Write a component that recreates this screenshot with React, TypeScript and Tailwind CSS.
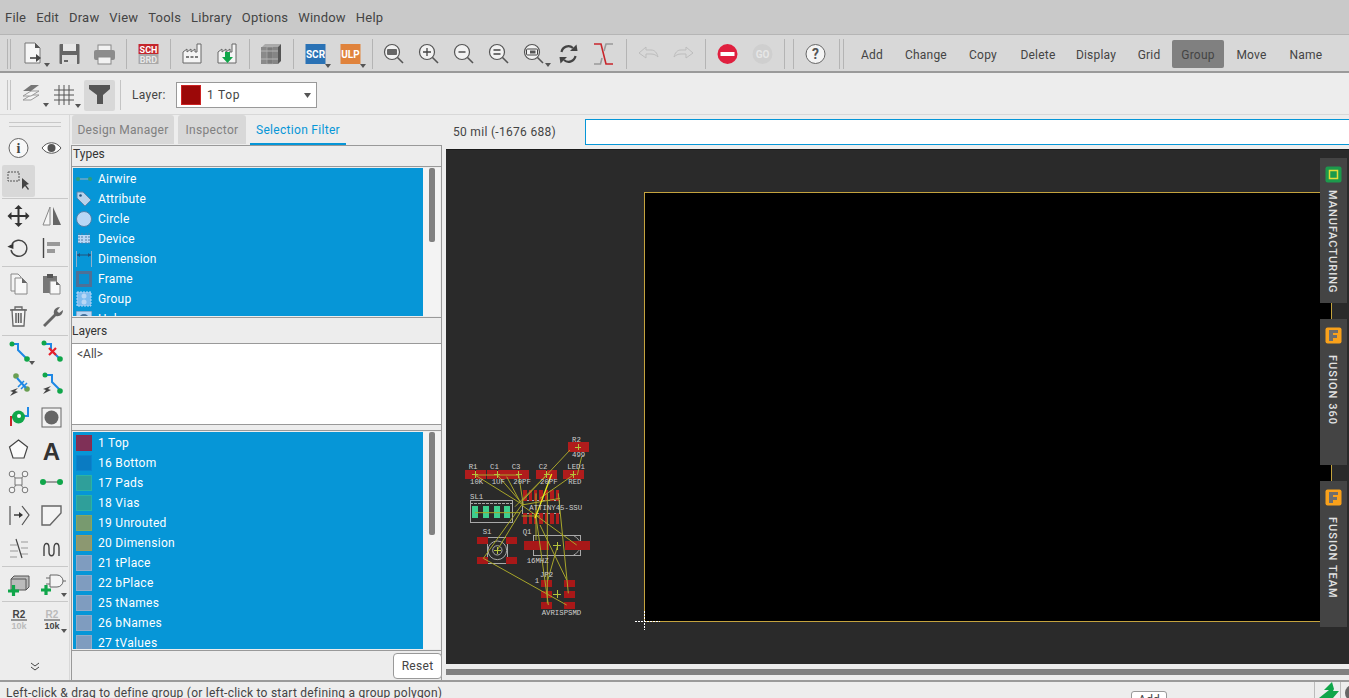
import type { ReactNode } from "react";

const FONT = "[font-family:Roboto,sans-serif]";

function Ico({ w = 35, h = 28, children }: { w?: number; h?: number; children: ReactNode }) {
  return (
    <svg width={w} height={h} viewBox={`0 0 ${w} ${h}`} className="shrink-0">
      {children}
    </svg>
  );
}

const Tri = ({ x = 27, y = 23 }: { x?: number; y?: number }) => (
  <path d={`M${x} ${y}h6l-3 4z`} fill="#555" />
);

function Mag({ children, tri }: { children?: ReactNode; tri?: boolean }) {
  return (
    <Ico>
      <circle cx="16" cy="12" r="7.500" fill="#f2f2f2" stroke="#555" strokeWidth="1.200" />
      <path d="M21.500 17.500l5.500 5.500" stroke="#555" strokeWidth="1.600" />
      {children}
      {tri && <Tri x={29} y={23} />}
    </Ico>
  );
}

function Sep({ className = "" }: { className?: string }) {
  return <div className={`w-px h-[30px] bg-[#b4b4b4] shrink-0 ${className}`} />;
}

const tools: { cls: string; label: string; active?: boolean }[] = [
  { cls: "w-[50px]", label: "Add" },
  { cls: "w-[58px]", label: "Change" },
  { cls: "w-[56px]", label: "Copy" },
  { cls: "w-[54px]", label: "Delete" },
  { cls: "w-[62px]", label: "Display" },
  { cls: "w-[44px]", label: "Grid" },
  { cls: "w-[52px] ml-[1px]", label: "Group", active: true },
  { cls: "w-[55px]", label: "Move" },
  { cls: "w-[54px]", label: "Name" },
];

function TopBar() {
  return (
    <div className="h-[39px] shrink-0 flex items-center pt-[2px] bg-[#d8d8d8] border-b-2 border-[#9a9a9a] border-t border-t-[#b5b5b5]">
      <div className="w-px h-[30px] bg-[#b4b4b4] ml-[7px]" />
      <div className="w-px h-[30px] bg-[#b4b4b4] ml-[2px]" />
      <div className="w-[6px]" />
      <Ico>
        <path d="M8 3h10l5 5v15H8z" fill="#f6f6f6" stroke="#777" />
        <path d="M18 3l5 5h-5z" fill="#555" />
        <path d="M13 18h7" stroke="#444" strokeWidth="1.600" />
        <path d="M19 14l5 4-5 4z" fill="#444" />
        <Tri x={27} y={23} />
      </Ico>
      <Ico>
        <rect x="7.500" y="4" width="20" height="20" rx="1" fill="#666" />
        <rect x="11" y="4" width="13" height="7" fill="#e8e8e8" />
        <rect x="10" y="15" width="15" height="9" fill="#dcdcdc" />
        <rect x="12" y="20" width="4" height="2" fill="#666" />
      </Ico>
      <Ico>
        <rect x="11" y="5" width="13" height="7" fill="#f2f2f2" stroke="#888" />
        <rect x="7" y="10" width="21" height="10" rx="2" fill="#8c8c8c" />
        <rect x="11" y="17" width="13" height="7" fill="#f2f2f2" stroke="#888" />
      </Ico>
      <Sep className="ml-[4px] mr-[4px]" />
      <Ico>
        <rect x="7.500" y="4" width="20" height="10" fill="#c4262c" />
        <rect x="7.500" y="14" width="20" height="10" fill="#a9a9a9" />
        <text x="17.500" y="12.500" textAnchor="middle" fontSize="9" fontWeight="700" fill="#fff">SCH</text>
        <text x="17.500" y="22.500" textAnchor="middle" fontSize="9" fontWeight="700" fill="#e8e8e8">BRD</text>
      </Ico>
      <Sep className="ml-[4px] mr-[4px]" />
      <Ico>
        <path d="M8 12l4-3v3l4-3v3l4-3v3l2 0V4h4v19H8z" fill="#f4f4f4" stroke="#666" />
        <path d="M11 17h3M15.500 17h3M20 17h3" stroke="#555" strokeWidth="1.500" />
      </Ico>
      <Ico>
        <path d="M8 12l4-3v3l4-3v3l4-3v3l2 0V4h4v19H8z" fill="#f4f4f4" stroke="#666" />
        <path d="M15 12h5v5h3l-5.500 6-5.500-6h3z" fill="#10a64a" />
      </Ico>
      <Sep className="ml-[4px] mr-[3px]" />
      <Ico>
        <path d="M9 7l3-3h16l-3 3z" fill="#aaa" />
        <rect x="8" y="7" width="6" height="17" fill="#8a8a8a" />
        <rect x="14" y="7" width="6" height="17" fill="#7b7b7b" stroke="#bbb" strokeWidth=".5" />
        <rect x="20" y="7" width="5" height="17" fill="#858585" />
        <path d="M25 7l3-3v17l-3 3z" fill="#555" />
        <path d="M8 11h17M8 19h17" stroke="#b5b5b5" />
      </Ico>
      <Sep className="ml-[5px] mr-[4px]" />
      <Ico>
        <rect x="7.500" y="4" width="20" height="20" fill="#2a72b5" />
        <text x="17.500" y="18" textAnchor="middle" fontSize="10" fontWeight="700" fill="#fff">SCR</text>
        <Tri x={27} y={24} />
      </Ico>
      <Ico>
        <rect x="7.500" y="4" width="20" height="20" fill="#e0833c" />
        <text x="17.500" y="18" textAnchor="middle" fontSize="10" fontWeight="700" fill="#fff">ULP</text>
        <Tri x={27} y={24} />
      </Ico>
      <Sep className="ml-[4px] mr-[3px]" />
      <Mag>
        <rect x="11" y="9" width="10" height="6" rx="1" fill="#666" />
      </Mag>
      <Mag>
        <path d="M12 12h8M16 8v8" stroke="#444" strokeWidth="1.300" />
      </Mag>
      <Mag>
        <path d="M12.500 12h7" stroke="#444" strokeWidth="1.400" />
      </Mag>
      <Mag>
        <path d="M12.500 10h7M12.500 14h7" stroke="#444" strokeWidth="1.300" />
      </Mag>
      <Mag tri>
        <rect x="10.500" y="9" width="11" height="6" rx="1" fill="none" stroke="#444" />
        <rect x="14" y="10.500" width="5.500" height="3" fill="#555" />
      </Mag>
      <Ico>
        <path d="M10.500 12a7 7 0 0 1 11.500-4" fill="none" stroke="#444" strokeWidth="2.200" />
        <path d="M24.500 16a7 7 0 0 1-11.500 4" fill="none" stroke="#444" strokeWidth="2.200" />
        <path d="M19 11h7.500l-1-6.500z" fill="#444" />
        <path d="M16 17H8.500l1 6.500z" fill="#444" />
      </Ico>
      <Ico>
        <path d="M8 4h7l5 20h7" fill="none" stroke="#c8252b" strokeWidth="1.600" />
        <path d="M27 4h-7l-2 7M16 18l-1.500 6H8" fill="none" stroke="#999" strokeWidth="1.600" />
      </Ico>
      <Sep className="ml-[5px] mr-[4px]" />
      <Ico>
        <path d="M8 13l7-6v3h5c4 0 6 3 7 7-2-2-4-3-7-3h-5v4z" fill="none" stroke="#bdbdbd" />
      </Ico>
      <Ico>
        <path d="M27 13l-7-6v3h-5c-4 0-6 3-7 7 2-2 4-3 7-3h5v4z" fill="none" stroke="#bdbdbd" />
      </Ico>
      <Sep className="ml-[4px] mr-[4px]" />
      <Ico>
        <circle cx="17.500" cy="14" r="10" fill="#e0203f" />
        <rect x="10.500" y="12" width="14" height="4" fill="#fff" />
      </Ico>
      <Ico>
        <circle cx="17.500" cy="14" r="10" fill="#cfcfcf" />
        <text x="17.500" y="18" textAnchor="middle" fontSize="10" fontWeight="700" fill="#e6e6e6">GO</text>
      </Ico>
      <Sep className="ml-[4px]" />
      <Sep className="ml-[8px] mr-[4px]" />
      <Ico>
        <circle cx="17.500" cy="14" r="9.500" fill="#f4f4f4" stroke="#666" />
        <text x="17.500" y="19" textAnchor="middle" fontSize="14" fontWeight="700" fill="#555">?</text>
      </Ico>
      <Sep className="ml-[6px]" />
      <Sep className="ml-[3px] mr-[3px]" />
      {tools.map((t) => (
        <div
          key={t.label}
          className={`${t.cls} h-[28px] pt-[1px] flex items-center justify-center rounded-[2px] text-xs tracking-[.2px] text-[#444] ${t.active ? "bg-[#808080]" : ""}`}
        >
          {t.label}
        </div>
      ))}
    </div>
  );
}

function SecondBar() {
  return (
    <div className="h-[42px] shrink-0 flex items-center pt-[3px] bg-[#ededed] border-b border-[#d8d8d8]">
      <div className="w-px h-[30px] bg-[#c4c4c4] ml-[7px]" />
      <div className="w-px h-[30px] bg-[#c4c4c4] ml-[2px]" />
      <div className="w-[5px]" />
      <Ico w={33}>
        <path d="M7 19l8-5h8l-8 5z" fill="#f4f4f4" stroke="#999" />
        <path d="M7 15l8-5h8l-8 5z" fill="#f4f4f4" stroke="#999" />
        <path d="M7 10l8-6h8l-8 6z" fill="#777" />
        <path d="M27 22h6l-3 4z" fill="#555" />
      </Ico>
      <Ico w={33}>
        <path d="M5 9h20M5 14h20M5 19h20M10 4v20M15 4v20M20 4v20" stroke="#555" />
        <path d="M26 23h6l-3 4z" fill="#555" />
      </Ico>
      <div className="w-[31px] h-[31px] bg-[#d8d8d8] rounded-[2px] flex items-center justify-center ml-[2px]">
        <svg width="22" height="20" viewBox="0 0 22 20">
          <path d="M0 0h21v4l-7 6v9H8v-9L0 4z" fill="#555" />
        </svg>
      </div>
      <div className="w-px h-[30px] bg-[#c4c4c4] ml-[5px]" />
      <span className="text-xs tracking-[.3px] text-[#444] ml-[11px] w-[44px]">Layer:</span>
      <div className="w-[141px] h-[26px] bg-white border border-[#999] flex items-center pl-[4px] pr-[5px]">
        <div className="w-[20px] h-[20px] bg-[#9c0808] border border-[#c22] shrink-0" />
        <span className="text-xs text-[#444] ml-[6px] tracking-[.7px] flex-1">1 Top</span>
        <svg width="7" height="5" viewBox="0 0 7 5"><path d="M0 0h7l-3.500 5z" fill="#555" /></svg>
      </div>
    </div>
  );
}

const G = "#10a64a";
const B = "#1e88e5";

const rows: ReactNode[][] = [
  [
    <>
      <circle cx="16.500" cy="16" r="9.500" fill="#f8f8f8" stroke="#666" />
      <text x="16.500" y="21" textAnchor="middle" fontSize="14" fontWeight="700" fill="#444" fontFamily="Liberation Serif">i</text>
    </>,
    <>
      <path d="M7 16c5-7 14-7 19 0-5 7-14 7-19 0z" fill="#fff" stroke="#555" />
      <circle cx="16.500" cy="16" r="4" fill="#555" />
    </>,
  ],
  [
    <>
      <rect x="6" y="8" width="11" height="9" fill="none" stroke="#555" strokeDasharray="2 1" />
      <path d="M20 14v11l3-3 3 4 1-1-3-4 3-1z" fill="#444" />
    </>,
    null,
  ],
  [],
  [
    <>
      <path d="M16.500 8v16M8.500 16h16" stroke="#333" strokeWidth="2" />
      <path d="M16.500 5l4 4h-8zM16.500 27l4-4h-8zM5.500 16l4-4v8zM27.500 16l-4-4v8z" fill="#333" />
    </>,
    <>
      <path d="M15 7v18H8z" fill="#f6f6f6" stroke="#888" />
      <path d="M18 7v18h8z" fill="#666" />
    </>,
  ],
  [
    <>
      <path d="M10 12a8 8 0 1 1-1 6" fill="none" stroke="#444" strokeWidth="1.400" />
      <path d="M6 13h7l-3 5z" fill="#333" transform="rotate(-30 9 15)" />
    </>,
    <>
      <path d="M8.500 6v20" stroke="#444" strokeWidth="1.400" />
      <rect x="12" y="10" width="13" height="4" fill="#999" />
      <rect x="12" y="17" width="8" height="4" fill="#999" />
    </>,
  ],
  [],
  [
    <>
      <path d="M9 6h7l3 3v14H9z" fill="#f4f4f4" stroke="#888" />
      <path d="M13 10h7l5 5v11H13z" fill="#f8f8f8" stroke="#888" />
      <path d="M20 10l5 5h-5z" fill="#666" />
    </>,
    <>
      <rect x="8" y="8" width="14" height="17" fill="#777" />
      <rect x="12" y="6" width="6" height="4" fill="#555" />
      <path d="M15 13h6l4 4v9H15z" fill="#f8f8f8" stroke="#888" />
      <path d="M21 13l4 4h-4z" fill="#666" />
    </>,
  ],
  [
    <>
      <path d="M8 10h17M13 10V7h7v3" fill="none" stroke="#666" strokeWidth="1.300" />
      <path d="M10 10h13l-1 16H11z" fill="#f4f4f4" stroke="#666" strokeWidth="1.300" />
      <path d="M14 13v10M16.500 13v10M19 13v10" stroke="#555" strokeWidth="1.400" />
    </>,
    <path d="M8 25l11-11c-1-4 2-7 6-7l-3 4 2 2 4-3c0 4-3 7-7 6L10 27z" fill="#666" />,
  ],
  [],
  [
    <>
      <path d="M10 8h6v6l8 8" fill="none" stroke={B} strokeWidth="2" />
      <circle cx="10" cy="8" r="2.500" fill={G} />
      <circle cx="25" cy="23" r="2.800" fill={G} />
      <path d="M27 25h6l-3 4z" fill="#555" />
    </>,
    <>
      <path d="M9 8h7v6l9 9" fill="none" stroke={B} strokeWidth="2" />
      <circle cx="9" cy="7" r="2.500" fill={G} />
      <circle cx="25" cy="23" r="2.800" fill={G} />
      <path d="M14 12l7 7M21 12l-7 7" stroke="#e8212b" strokeWidth="2.200" />
    </>,
  ],
  [
    <>
      <circle cx="14" cy="7" r="2.800" fill="#6a9f53" />
      <circle cx="25" cy="20" r="2.800" fill="#6a9f53" />
      <path d="M15 9l9 10" stroke={B} strokeWidth="2" />
      <path d="M16 18l6-6M19 20l6-6" stroke={B} strokeWidth="1.500" />
      <path d="M8 22l8-3-3 3 3 1-8 4 3-4z" fill="#444" />
    </>,
    <>
      <path d="M9 6h8v7l8 8" fill="none" stroke={B} strokeWidth="2" />
      <circle cx="10" cy="6" r="2.500" fill={G} />
      <circle cx="25" cy="22" r="2.800" fill={G} />
      <path d="M8 20l8-3-3 3 3 1-8 4 3-4z" fill="#444" />
    </>,
  ],
  [
    <>
      <path d="M9 25v-9h6" fill="none" stroke="#c8252b" strokeWidth="2" />
      <path d="M26 6v9h-6" fill="none" stroke={B} strokeWidth="2" />
      <circle cx="16.500" cy="16" r="6.500" fill={G} />
      <circle cx="17" cy="15" r="2" fill="#fff" />
    </>,
    <>
      <rect x="7" y="7" width="19" height="19" fill="#f2f2f2" stroke="#666" />
      <circle cx="16.500" cy="16.500" r="7" fill="#666" />
    </>,
  ],
  [
    <path d="M16.500 6l9 7-3.500 11H11L7.500 13z" fill="#fbfbfb" stroke="#444" strokeWidth="1.200" />,
    <text x="16.500" y="26" textAnchor="middle" fontSize="24" fontWeight="700" fill="#333" fontFamily="Liberation Sans">A</text>,
  ],
  [
    <>
      <path d="M10 8l13 16M23 8L10 24" stroke="#777" />
      <rect x="13" y="12" width="7" height="7" fill="#f4f4f4" stroke="#777" />
      <circle cx="10" cy="8" r="2.800" fill="#f4f4f4" stroke="#777" />
      <circle cx="23" cy="8" r="2.800" fill="#f4f4f4" stroke="#777" />
      <circle cx="10" cy="24" r="2.800" fill="#f4f4f4" stroke="#777" />
      <circle cx="23" cy="24" r="2.800" fill="#f4f4f4" stroke="#777" />
    </>,
    <>
      <path d="M8 16h17" stroke="#888" strokeWidth="1.600" />
      <circle cx="8" cy="16" r="3" fill={G} />
      <circle cx="25" cy="16" r="3" fill={G} />
    </>,
  ],
  [
    <>
      <path d="M8 7v19" stroke="#555" strokeWidth="1.200" />
      <path d="M20 7l7 9-7 10" fill="none" stroke="#555" strokeWidth="1.200" />
      <path d="M12 16h6" stroke="#333" strokeWidth="1.400" />
      <path d="M17 13l4 3-4 3z" fill="#333" />
    </>,
    <path d="M7 7h19v7L15 26H7z" fill="#f4f4f4" stroke="#666" strokeWidth="1.400" />,
  ],
  [
    <>
      <path d="M8 13h7M8 19h8M8 25h7M19 10h7M19 16h7M19 22h7" stroke="#999" strokeWidth="1.200" />
      <path d="M14 7l6 19" stroke="#444" strokeWidth="1.200" />
    </>,
    <path d="M7 24v-8c0-6 5-6 5 0v4c0 5 5 5 5 0v-4c0-6 5-6 5 0v8" transform="translate(2 0)" fill="none" stroke="#444" strokeWidth="1.400" />,
  ],
  [],
  [
    <>
      <path d="M9 12l3-3h15v11l-3 3H9z" fill="#bbb" stroke="#555" />
      <path d="M9 12h15v11" fill="none" stroke="#555" />
      <path d="M6 24h11M11.500 18v11" stroke={G} strokeWidth="3.200" />
    </>,
    <>
      <path d="M15 8h7a6 6 0 0 1 0 12h-7zM11 11h4M11 17h4M28 14h3" fill="#f4f4f4" stroke="#666" />
      <path d="M6 23h10M11 18v10" stroke={G} strokeWidth="3.200" />
      <path d="M26 26h6l-3 4z" fill="#555" />
    </>,
  ],
  [],
  [
    <>
      <text x="17" y="15" textAnchor="middle" fontSize="10" fontWeight="700" fill="#444" fontFamily="Liberation Sans">R2</text>
      <path d="M9 17h16" stroke="#444" />
      <text x="17" y="26" textAnchor="middle" fontSize="9" fontWeight="700" fill="#bbb" fontFamily="Liberation Sans">10k</text>
    </>,
    <>
      <text x="17" y="15" textAnchor="middle" fontSize="10" fontWeight="700" fill="#bbb" fontFamily="Liberation Sans">R2</text>
      <path d="M9 17h16" stroke="#444" />
      <text x="17" y="26" textAnchor="middle" fontSize="9" fontWeight="700" fill="#444" fontFamily="Liberation Sans">10k</text>
      <path d="M26 26h6l-3 4z" fill="#555" />
    </>,
  ],
];

function LeftTools() {
  return (
    <div className="w-[70px] shrink-0 bg-[#ededed] flex flex-col items-center border-r border-[#d8d8d8]">
      <div className="w-[52px] mt-[7px] border-t border-b border-[#c8c8c8] h-[5px] mb-[5px]" />
      {rows.map((row, i) =>
        row.length === 0 ? (
          <div key={i} className="w-[66px] h-px bg-[#c8c8c8] shrink-0 my-[1px]" />
        ) : (
          <div key={i} className="flex shrink-0 h-[32.6px] w-[66px]">
            {row.map((icon, j) => (
              <div
                key={j}
                className={`w-[33px] h-[32px] flex items-center justify-center rounded-[2px] ${i === 1 && j === 0 ? "bg-[#d8d8d8]" : ""}`}
              >
                {icon && <Ico w={33} h={33}>{icon}</Ico>}
              </div>
            ))}
          </div>
        ),
      )}
      <div className="mt-auto mb-[9px]">
        <svg width="10" height="9" viewBox="0 0 10 9">
          <path d="M1 1l4 3 4-3M1 5l4 3 4-3" fill="none" stroke="#444" />
        </svg>
      </div>
    </div>
  );
}

const typeIcons: [string, ReactNode][] = [
  ["Airwire", <><path d="M1 8h14" stroke="#6fa8c8" strokeWidth="1.500" /><circle cx="2" cy="8" r="2" fill="#2e9e78" /><circle cx="14" cy="8" r="2" fill="#2e9e78" /></>],
  ["Attribute", <><path d="M1 1h6l8 8-6 6-8-8z" fill="#b9d2ea" stroke="#5a86ad" /><circle cx="4.500" cy="4.500" r="1.300" fill="#23527c" /></>],
  ["Circle", <circle cx="8" cy="8" r="7.500" fill="#b9d7f5" stroke="#4f7fa8" />],
  ["Device", <><rect x="2" y="4" width="12" height="8" fill="#b9d7f5" /><path d="M3 2v12M6 2v12M10 2v12M13 2v12" stroke="#4f7fa8" strokeDasharray="2 1" /></>],
  ["Dimension", <><path d="M.5 0v16M15.500 0v16" stroke="#8fb0cc" /><path d="M1 4h14" stroke="#23527c" /><path d="M1 4l3-2v4zM15 4l-3-2v4z" fill="#23527c" /></>],
  ["Frame", <><rect width="16" height="16" fill="#4f7096" /><rect x="3" y="3" width="10" height="10" fill="#0a8fd0" /></>],
  ["Group", <><rect x="1" y="1" width="14" height="14" fill="#7fbdf0" stroke="#b9d7f5" strokeDasharray="2 1" /><circle cx="8" cy="5" r="2.500" fill="#b9d7f5" /><circle cx="8" cy="11" r="2.500" fill="#b9d7f5" /></>],
  ["Hole", <><rect x="0" y="0" width="16" height="16" fill="#b9d7f5" stroke="#5a86ad" /><circle cx="8" cy="8" r="5" fill="#44719a" /></>],
];

const layers: [string, string, string][] = [
  ["1 Top", "bg-[#7f3057]", "border-[#8d2a4c]"],
  ["16 Bottom", "bg-[#0a7bc2]", "border-[#0a84cf]"],
  ["17 Pads", "bg-[#2f9f9a]", "border-[#2bb3a4]"],
  ["18 Vias", "bg-[#2f9f9a]", "border-[#2bb3a4]"],
  ["19 Unrouted", "bg-[#789a6f]", "border-[#84a860]"],
  ["20 Dimension", "bg-[#8c9871]", "border-[#a09c5c]"],
  ["21 tPlace", "bg-[#7f9cbf]", "border-[#93aac6]"],
  ["22 bPlace", "bg-[#7f9cbf]", "border-[#93aac6]"],
  ["25 tNames", "bg-[#7f9cbf]", "border-[#93aac6]"],
  ["26 bNames", "bg-[#7f9cbf]", "border-[#93aac6]"],
  ["27 tValues", "bg-[#7f9cbf]", "border-[#93aac6]"],
];

function Scroll({ thumb }: { thumb: string }) {
  return (
    <div className="w-[17px] shrink-0 bg-[#f3f3f3] flex justify-center">
      <div className={`w-[6px] rounded-[2px] bg-[#808080] ${thumb}`} />
    </div>
  );
}

function Panel() {
  return (
    <div className="w-[376px] shrink-0 bg-[#ededed] flex flex-col text-xs text-[#444]">
      <div className="h-[30px] shrink-0 flex pl-[2px] gap-[4px]">
        <div className="w-[102px] h-[29px] pt-[1px] bg-[#d8d8d8] rounded-t-[3px] flex items-center justify-center text-[#808080] tracking-[.3px]">Design Manager</div>
        <div className="w-[68px] h-[29px] pt-[1px] bg-[#d8d8d8] rounded-t-[3px] flex items-center justify-center text-[#808080] tracking-[.3px]">Inspector</div>
        <div className="w-[96px] h-[30px] pt-[1px] border-b-2 border-[#0696d7] flex items-center justify-center text-[#0696d7] tracking-[.3px]">Selection Filter</div>
      </div>
      <div className="ml-px w-[371px] flex-1 flex flex-col border-x border-t border-[#999] min-h-0">
        <div className="h-[20px] shrink-0 flex items-center pl-px pb-[4px] text-[#333]">Types</div>
        <div className="h-[152px] shrink-0 border-y border-x border-[#999] flex p-px overflow-hidden -mx-px">
          <div className="flex-1 bg-[#0696d7] overflow-hidden pl-[3px] pt-px">
            {typeIcons.map(([label, icon]) => (
              <div key={label} className="h-[20px] flex items-center text-white shrink-0">
                <svg width="16" height="16" viewBox="0 0 16 16" className="shrink-0">{icon}</svg>
                <span className="ml-[6px] tracking-[.2px]">{label}</span>
              </div>
            ))}
          </div>
          <Scroll thumb="h-[74px]" />
        </div>
        <div className="h-[25px] shrink-0 flex items-center text-[#333]">Layers</div>
        <div className="h-[82px] shrink-0 bg-white border-y border-[#999] -mx-px border-x pl-[5px] pt-[2px] text-[#444]">&lt;All&gt;</div>
        <div className="h-[5px] shrink-0" />
        <div className="h-[221px] shrink-0 border border-[#999] flex p-px overflow-hidden -mx-px">
          <div className="flex-1 bg-[#0696d7] overflow-hidden pl-[3px] pt-px">
            {layers.map(([label, bg, bd]) => (
              <div key={label} className="h-[20px] flex items-center text-white">
                <div className={`w-[16px] h-[16px] border shrink-0 ${bg} ${bd}`} />
                <span className="ml-[6px] tracking-[.3px]">{label}</span>
              </div>
            ))}
          </div>
          <Scroll thumb="h-[103px]" />
        </div>
        <div className="flex justify-end pt-[2px] -mr-px">
          <div className="w-[49px] h-[26px] bg-white border border-[#999] rounded-[4px] flex items-center justify-center tracking-[.3px]">Reset</div>
        </div>
      </div>
    </div>
  );
}

const pad = (x: number, y: number, w: number, h: number, fill = "#a81818") => (
  <rect key={`${x}-${y}`} x={x} y={y} width={w} height={h} fill={fill} />
);

const wires = [
  "M45 135L190 225", "M112 135L190 225", "M176 135L190 225", "M140 140L180 215", "M45 135H176", "M260 135L165 230",
  "M330 60L185 215", "M365 80L352 135", "M340 135L240 205", "M45 248H180", "M70 385L185 225", "M70 385L320 525",
  "M185 225L300 205", "M185 225L350 345", "M228 190V330", "M228 260L265 525", "M262 190V520", "M295 190L325 490",
  "M240 285L320 450", "M112 360L185 240", "M292 350L262 455", "M185 258H240",
];

const labels: [number, number, string][] = [
  [336, 36, "R2"], [336, 81, "499"], [26, 116, "R1"], [30, 161, "10K"], [90, 116, "C1"], [95, 161, "1UF"],
  [155, 116, "C3"], [160, 161, "20PF"], [236, 116, "C2"], [240, 161, "20PF"], [322, 116, "LED1"], [325, 161, "RED"],
  [30, 206, "SL1"], [208, 240, "ATTINY45-SSU"], [68, 312, "S1"], [188, 312, "Q1"], [200, 398, "16MHZ"],
  [224, 458, "1"], [240, 440, "JP2"], [245, 556, "AVRISPSMD"],
];

function Pcb() {
  return (
    <svg width="200" height="200" viewBox="0 0 600 600" className="absolute left-[14px] top-[280px]" shapeRendering="crispEdges">
      <g fill="none" stroke="#a9a9a9" strokeWidth="3">
        <rect x="30" y="212" width="128" height="66" />
        <path d="M30 220h128" strokeDasharray="8 4" />
        <rect x="82" y="322" width="60" height="78" />
        <circle cx="112" cy="361" r="28" shapeRendering="auto" />
        <circle cx="112" cy="361" r="14" shapeRendering="auto" />
        <rect x="220" y="316" width="142" height="60" />
        <path d="M340 316c16 10 22 20 22 30s-6 20-22 30" shapeRendering="auto" />
        <rect x="188" y="210" width="110" height="40" />
      </g>
      {[36, 70, 103, 132].map((x) => pad(x, 228, 18, 36, "#3ecf8e"))}
      {[[323, 36], [355, 36], [15, 120], [47, 120], [81, 120], [113, 120], [145, 120], [177, 120], [228, 120], [260, 120], [310, 120], [342, 120]].map(([x, y]) =>
        pad(x, y, 31, y === 36 ? 30 : 27, "#b01c1c"),
      )}
      {[190, 206, 222, 238, 255, 271, 288].flatMap((x) => [
        <rect key={`u${x}`} x={x} y={180} width="10" height="32" fill="#b01c1c" />,
        <rect key={`d${x}`} x={x} y={250} width="10" height="32" fill="#b01c1c" />,
      ])}
      {pad(192, 333, 75, 26)}
      {pad(315, 333, 75, 26)}
      {[[51, 321], [138, 321], [51, 381], [138, 381]].map(([x, y]) => pad(x, y, 33, 20))}
      {[[243, 450], [311, 450], [243, 483], [311, 483], [243, 516], [311, 516]].map(([x, y]) => pad(x, y, 33, 20))}
      <g fill="none" stroke="#a8a62a" strokeWidth="3" shapeRendering="auto">
        {wires.map((d) => (
          <path key={d} d={d} />
        ))}
      </g>
      <path d="M275 132L225 265" stroke="#ecec20" strokeWidth="4" shapeRendering="auto" />
      <path d="M355 42v18M346 51h18M45 124v20M36 134h18M112 124v20M103 134h18M176 124v20M167 134h18M260 124v20M251 134h18M340 124v20M331 134h18M112 350v22M101 361h22M292 335v24M280 347h24M292 480v24M280 492h24" stroke="#b5c43c" strokeWidth="3" />
      <g fill="#cfcfcf" fontFamily="Liberation Mono" fontSize="22">
        {labels.map(([x, y, t]) => (
          <text key={t + x} x={x} y={y}>{t}</text>
        ))}
      </g>
      <path d="M525 574h75M553 544v56" stroke="#fff" strokeWidth="3" strokeDasharray="5 4" />
    </svg>
  );
}

function SideTab({ h, icon, label, top }: { h: string; icon: ReactNode; label: string; top: string }) {
  return (
    <div className={`${h} w-[27px] bg-[#444] flex flex-col items-center pt-[8px]`}>
      <svg width="17" height="17" viewBox="0 0 17 17" className="shrink-0">{icon}</svg>
      <span className={`${top} mr-[3px] [writing-mode:vertical-rl] text-[11px] font-medium tracking-[1px] text-[#e2e2e2] whitespace-nowrap`}>{label}</span>
    </div>
  );
}

const fusion = (
  <>
    <rect x=".5" y=".5" width="16" height="16" rx="2" fill="#f9a11b" />
    <path d="M4 3h9v3H8v2h4v3H8v3H4z" fill="#6e6e6e" />
  </>
);

function Canvas() {
  return (
    <div className="flex-1 min-w-0 flex flex-col bg-[#ededed]">
      <div className="h-[34px] shrink-0 flex items-center pl-[7px] gap-[29px] text-xs tracking-[.3px] text-[#444]">
        <span className="w-[103px] whitespace-nowrap">50 mil (-1676 688)</span>
        <div className="flex-1 h-[26px] bg-white border border-[#0696d7] border-r-0" />
      </div>
      <div className="relative h-[515px] shrink-0 bg-[#2a2a2a] border-t border-[#1a1a1a] overflow-hidden">
        <div className="absolute left-[198px] top-[42px] w-[688px] h-[430px] bg-black border border-[#c4a33e]" />
        <Pcb />
        <div className="absolute right-[2px] top-[8px] flex flex-col gap-[16px]">
          <SideTab
            h="h-[145px]"
            top="mt-[7px]"
            label="MANUFACTURING"
            icon={
              <>
                <rect x=".5" y=".5" width="16" height="16" rx="2" fill="#1c9a4c" />
                <rect x="4.500" y="4.500" width="8" height="8" fill="#1c9a4c" stroke="#e6dc3a" strokeWidth="1.500" />
              </>
            }
          />
          <SideTab h="h-[146px]" top="mt-[11px]" label="FUSION 360" icon={fusion} />
          <SideTab h="h-[146px]" top="mt-[11px]" label="FUSION TEAM" icon={fusion} />
        </div>
      </div>
      <div className="h-[5px] shrink-0" />
      <div className="h-[6px] shrink-0 bg-[#808080]" />
      <div className="flex-1" />
    </div>
  );
}

function StatusBar() {
  return (
    <div className="h-[18px] shrink-0 relative flex bg-[#ededed] border-t-2 border-[#9a9a9a] text-xs text-[#444] overflow-hidden">
      <span className="ml-[6px] mt-[3px] whitespace-nowrap tracking-[.24px]">Left-click &amp; drag to define group (or left-click to start defining a group polygon)</span>
      <div className="absolute left-[1131px] top-[9px] w-[36px] h-[16px] bg-white border border-[#999] rounded-[3px] flex justify-center leading-[16px]">Add</div>
      <div className="absolute left-[1314px] top-0 w-px h-[16px] bg-[#bbb]" />
      <svg width="20" height="16" viewBox="0 0 20 16" className="absolute left-[1319px] top-0">
        <path d="M13 0L5 8h5l-10 8h14l6-7h-6l1-2z" fill="#10a64a" />
      </svg>
      <div className="absolute left-[1340px] top-0 w-px h-[16px] bg-[#bbb]" />
      <div className="absolute left-[1345px] top-[3px] w-[16px] h-[16px] rounded-full bg-[#666]" />
    </div>
  );
}

export default function App() {
  return (
    <div className={`w-[1349px] h-[698px] overflow-hidden flex flex-col bg-[#ededed] ${FONT}`}>
      <div className="h-[34px] shrink-0 bg-[#c9c9c9] flex items-center pl-[5px] pt-[1px] gap-[10px] text-[13px] tracking-[.2px] text-[#444]">
        {["File", "Edit", "Draw", "View", "Tools", "Library", "Options", "Window", "Help"].map((m) => (
          <span key={m}>{m}</span>
        ))}
      </div>
      <TopBar />
      <SecondBar />
      <div className="flex-1 min-h-0 flex">
        <LeftTools />
        <Panel />
        <Canvas />
      </div>
      <StatusBar />
    </div>
  );
}
